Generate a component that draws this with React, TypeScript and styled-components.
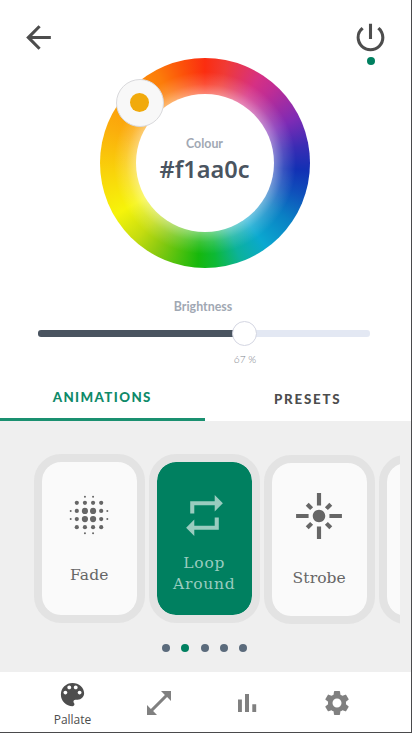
import React from "react";
import styled, { createGlobalStyle } from "styled-components";

const Global = createGlobalStyle`
  * { box-sizing: border-box; }
  body { margin: 0; background: #fff; font-family: Lato, "Liberation Sans", sans-serif; }
`;

const Screen = styled.main`
  width: 412px;
  height: 733px;
  display: flex;
  flex-direction: column;
  background: #fff;
  border-right: 1px solid #4a4a4c;
  border-bottom: 1px solid #4a4a4c;
  box-shadow: 0 1px 0 #b9b9b9;
  overflow: hidden;
`;

const Icon = styled.svg<{ $size: number }>`
  display: block;
  width: ${(p) => p.$size}px;
  height: ${(p) => p.$size}px;
  flex: none;
  fill: currentColor;
`;

const Header = styled.header`
  height: 58px;
  flex: none;
  display: flex;
  justify-content: space-between;
  align-items: flex-start;
  padding: 19px 22px 0 20px;
  color: #4d4d4d;
`;

const IconButton = styled.button`
  display: flex;
  flex-direction: column;
  align-items: center;
  gap: 1.3px;
  padding: 0;
  border: 0;
  background: none;
  color: inherit;
`;

const StatusDot = styled.span`
  width: 8px;
  height: 8px;
  border-radius: 50%;
  background: #008060;
`;

const WheelArea = styled.section`
  position: relative;
  width: 210px;
  height: 210px;
  flex: none;
  margin-left: 100px;
  border-radius: 50%;
  display: flex;
  align-items: center;
  justify-content: center;
  background:
    radial-gradient(circle at center, rgba(255,255,255,.42) 69px, rgba(255,255,255,.16) 79px, rgba(255,255,255,0) 91px),
    conic-gradient(#fb2d10 0deg, #f03a35 12deg, #d63083 32deg, #c02d94 42deg, #7d2bb5 64deg,
      #3a2cb4 80deg, #1230b4 94deg, #0f50bb 108deg, #0a80c4 124deg, #0aa8d0 144deg, #0cb29a 160deg,
      #0db935 174deg, #16b80c 184deg, #8cca10 209deg, #c4dc10 222deg, #f6f40a 240deg, #f9d40a 264deg,
      #fbae0c 290deg, #fd9409 315deg, #fc7c0a 332deg, #fc500a 347deg, #fb2d10 360deg);
`;

const WheelHole = styled.div`
  width: 138px;
  height: 138px;
  border-radius: 50%;
  background: #fff;
  display: flex;
  flex-direction: column;
  align-items: center;
  padding: 42px 1px 0 0;
`;

const Label = styled.span`
  font: 700 12.4px/16px Lato, sans-serif;
  color: #a1a8b3;
`;

const HexValue = styled.strong`
  font: 600 23.5px/32px "Noto Sans", sans-serif;
  margin-top: 1px;
  color: #4a5460;
`;

const WheelKnob = styled.div`
  position: absolute;
  left: 15.5px;
  top: 20.5px;
  width: 48px;
  height: 48px;
  border-radius: 50%;
  border: 1px solid #d9d9dc;
  background: #f8f8f8;
  display: flex;
  align-items: center;
  justify-content: center;
`;

const KnobColour = styled.span`
  width: 19.5px;
  height: 19.5px;
  border-radius: 50%;
  background: #f1aa0c;
`;

const BrightnessArea = styled.section`
  height: 108px;
  flex: none;
  padding: 31px 42px 0 37px;
  display: flex;
  flex-direction: column;
  align-items: center;
`;

const Track = styled.div`
  position: relative;
  width: 332px;
  height: 6.5px;
  margin: 15px 0 0 1px;
  border-radius: 3px;
  background: linear-gradient(90deg, #4a5460 206px, #e3e8f3 206px);
`;

const Thumb = styled.div`
  position: absolute;
  left: 194px;
  top: -9px;
  width: 25px;
  height: 25px;
  border-radius: 50%;
  border: 1px solid #d4d6e2;
  background: #fff;
`;

const Percent = styled.span`
  font: 300 10.2px/14px Lato, sans-serif;
  color: #7d838c;
  margin: 15.5px 0 0 84px;
`;

const Tabs = styled.nav`
  height: 45px;
  flex: none;
  display: grid;
  grid-template-columns: 204.5px 1fr;
`;

const Tab = styled.button<{ $active?: boolean }>`
  border: 0;
  background: none;
  padding: ${(p) => (p.$active ? "0 0 0" : "2px 0 2px")};
  border-bottom: ${(p) => (p.$active ? "3px solid #1a9070" : "0")};
  color: ${(p) => (p.$active ? "#0f8a69" : "#4d4d4d")};
  font: 900 13.3px/16px Lato, sans-serif;
  letter-spacing: ${(p) => (p.$active ? "1.4px" : "1.8px")};
`;

const Animations = styled.section`
  height: 250.5px;
  flex: none;
  background: #efefef;
  padding-top: 33px;
  display: flex;
  flex-direction: column;
  align-items: center;
`;

const Carousel = styled.div`
  align-self: flex-start;
  width: 399.5px;
  height: 170px;
  padding-left: 34px;
  display: flex;
  gap: 4.5px;
  overflow: hidden;
`;

const Card = styled.article<{ $active?: boolean; $drop?: number; $icon: number }>`
  width: 110.5px;
  height: 169px;
  margin-top: ${(p) => p.$drop || 0}px;
  flex: none;
  border: 8px solid #e3e3e3;
  border-radius: 27px;
  background: ${(p) => (p.$active ? "#008060" : "#fafafa")};
  background-clip: padding-box;
  color: ${(p) => (p.$active ? "#99ccbf" : "#666")};
  display: flex;
  flex-direction: column;
  align-items: center;
  padding-top: ${(p) => p.$icon}px;
`;

const CardTitle = styled.h3<{ $top: number; $spacing?: number }>`
  margin: ${(p) => p.$top}px 0 0;
  font: 400 15.5px/20.5px "DejaVu Serif", serif;
  letter-spacing: ${(p) => p.$spacing ?? 0.1}px;
  text-align: center;
`;

const Pager = styled.div`
  display: flex;
  gap: 11.15px;
  margin: 20px 2px 0 0;
`;

const Dot = styled.span<{ $active?: boolean }>`
  width: 8px;
  height: 8px;
  border-radius: 50%;
  background: ${(p) => (p.$active ? "#008060" : "#5b6b7c")};
`;

const BottomNav = styled.nav`
  flex: 1;
  display: grid;
  grid-template-columns: 72px 100px 77px 103px;
  padding-left: 36.5px;
`;

const NavItem = styled.button<{ $active?: boolean; $top?: number }>`
  border: 0;
  background: none;
  padding: ${(p) => p.$top ?? 17}px 0 0;
  display: flex;
  flex-direction: column;
  align-items: center;
  gap: 2px;
  color: ${(p) => (p.$active ? "#4d4d4d" : "#808080")};
  font: 400 12px/16px "Open Sans", sans-serif;
`;

const blurDots: [number, number, number][] = [];
[-12.2, -4.07, 4.07, 12.2].forEach((y) =>
  [-12.2, -4.07, 4.07, 12.2].forEach((x) => {
    const centre = Math.abs(x) < 5 && Math.abs(y) < 5;
    blurDots.push([x, y, centre ? 3.1 : 2.1]);
  })
);
[-4.07, 4.07].forEach((v) => {
  blurDots.push([v, -18.3, 1], [v, 18.3, 1], [-18.3, v, 1], [18.3, v, 1]);
});

export default function App() {
  return (
    <>
      <Global />
      <Screen>
        <Header>
          <IconButton aria-label="Back">
            <Icon $size={37} viewBox="0 0 24 24"><path d="M20 11H7.83l5.59-5.59L12 4l-8 8 8 8 1.41-1.41L7.83 13H20v-2z" /></Icon>
          </IconButton>
          <IconButton aria-label="Power">
            <Icon $size={37} viewBox="0 0 24 24"><path d="M13 3h-2v10h2V3zm4.83 2.17l-1.42 1.42A6.92 6.92 0 0 1 19 12c0 3.87-3.13 7-7 7A6.995 6.995 0 0 1 7.58 6.58L6.17 5.17A8.932 8.932 0 0 0 3 12a9 9 0 0 0 18 0c0-2.74-1.23-5.18-3.17-6.83z" /></Icon>
            <StatusDot />
          </IconButton>
        </Header>
        <WheelArea>
          <WheelHole>
            <Label>Colour</Label>
            <HexValue>#f1aa0c</HexValue>
          </WheelHole>
          <WheelKnob><KnobColour /></WheelKnob>
        </WheelArea>
        <BrightnessArea>
          <Label>Brightness</Label>
          <Track><Thumb /></Track>
          <Percent>67 %</Percent>
        </BrightnessArea>
        <Tabs>
          <Tab $active>ANIMATIONS</Tab>
          <Tab>PRESETS</Tab>
        </Tabs>
        <Animations>
          <Carousel>
            <Card $icon={33}>
              <Icon $size={40} viewBox="-20 -20 40 40">
                {blurDots.map(([x, y, r], i) => <circle key={i} cx={x} cy={y} r={r} />)}
              </Icon>
              <CardTitle $top={30}>Fade</CardTitle>
            </Card>
            <Card $active $icon={29}>
              <Icon $size={49} viewBox="0 0 24 24"><path d="M7 7h10v3l4-4-4-4v3H5v6h2V7zm10 10H7v-3l-4 4 4 4v-3h12v-6h-2v4z" /></Icon>
              <CardTitle $top={13} $spacing={0.75}>Loop<br />Around</CardTitle>
            </Card>
            <Card $drop={1} $icon={28}>
              <Icon $size={50} viewBox="0 0 24 24"><path d="M7 11H1v2h6v-2zm2.17-3.24L7.05 5.64 5.64 7.05l2.12 2.12 1.41-1.41zM13 1h-2v6h2V1zm5.36 6.05l-1.41-1.41-2.12 2.12 1.41 1.41 2.12-2.12zM17 11v2h6v-2h-6zm-5-2c-1.66 0-3 1.34-3 3s1.34 3 3 3 3-1.34 3-3-1.34-3-3-3zm2.83 7.24l2.12 2.12 1.41-1.41-2.12-2.12-1.41 1.41zm-9.19.71l1.41 1.41 2.12-2.12-1.41-1.41-2.12 2.12zM11 23h2v-6h-2v6z" /></Icon>
              <CardTitle $top={27}>Strobe</CardTitle>
            </Card>
            <Card $drop={1} $icon={0} />
          </Carousel>
          <Pager><Dot /><Dot $active /><Dot /><Dot /><Dot /></Pager>
        </Animations>
        <BottomNav>
          <NavItem $active $top={7}>
            <Icon $size={31} viewBox="0 0 24 24"><path d="M12 3a9 9 0 0 0 0 18c.83 0 1.5-.67 1.5-1.5 0-.39-.15-.74-.39-1.01-.23-.26-.38-.61-.38-.99 0-.83.67-1.5 1.5-1.5H16c2.76 0 5-2.24 5-5 0-4.42-4.03-8-9-8zm-5.5 9c-.83 0-1.5-.67-1.5-1.5S5.67 9 6.5 9 8 9.67 8 10.5 7.33 12 6.5 12zm3-4C8.67 8 8 7.33 8 6.5S8.67 5 9.5 5s1.5.67 1.5 1.5S10.33 8 9.5 8zm5 0c-.83 0-1.5-.67-1.5-1.5S13.67 5 14.5 5s1.5.67 1.5 1.5S15.33 8 14.5 8zm3 4c-.83 0-1.5-.67-1.5-1.5S16.67 9 17.5 9s1.5.67 1.5 1.5-.67 1.5-1.5 1.5z" /></Icon>
            Pallate
          </NavItem>
          <NavItem aria-label="Expand">
            <Icon $size={28} viewBox="-14 -14 28 28"><path d="M2 -12H12V-2L8.1 -5.9L-5.9 8.1L-2 12H-12V2L-8.1 5.9L5.9 -8.1Z" /></Icon>
          </NavItem>
          <NavItem aria-label="Statistics">
            <Icon $size={28} viewBox="-14 -14 28 28"><path d="M-9 -3.5h3.9V9H-9zM-2 -9h4V9h-4zM5.3 1.2h3.9V9H5.3z" /></Icon>
          </NavItem>
          <NavItem aria-label="Settings" $top={16}>
            <Icon $size={30} viewBox="0 0 24 24"><path d="M19.14 12.94c.04-.3.06-.61.06-.94 0-.32-.02-.64-.07-.94l2.03-1.58a.49.49 0 0 0 .12-.61l-1.92-3.32a.488.488 0 0 0-.59-.22l-2.39.96c-.5-.38-1.03-.7-1.62-.94l-.36-2.54a.484.484 0 0 0-.48-.41h-3.84c-.24 0-.43.17-.47.41l-.36 2.54c-.59.24-1.13.57-1.62.94l-2.39-.96c-.22-.08-.47 0-.59.22L2.74 8.87c-.12.21-.08.47.12.61l2.03 1.58c-.05.3-.09.63-.09.94s.02.64.07.94l-2.03 1.58a.49.49 0 0 0-.12.61l1.92 3.32c.12.22.37.29.59.22l2.39-.96c.5.38 1.03.7 1.62.94l.36 2.54c.05.24.24.41.48.41h3.84c.24 0 .44-.17.47-.41l.36-2.54c.59-.24 1.13-.56 1.62-.94l2.39.96c.22.08.47 0 .59-.22l1.92-3.32c.12-.22.07-.47-.12-.61l-2.01-1.58zM12 15.6c-1.98 0-3.6-1.62-3.6-3.6s1.62-3.6 3.6-3.6 3.6 1.62 3.6 3.6-1.62 3.6-3.6 3.6z" /></Icon>
          </NavItem>
        </BottomNav>
      </Screen>
    </>
  );
}
